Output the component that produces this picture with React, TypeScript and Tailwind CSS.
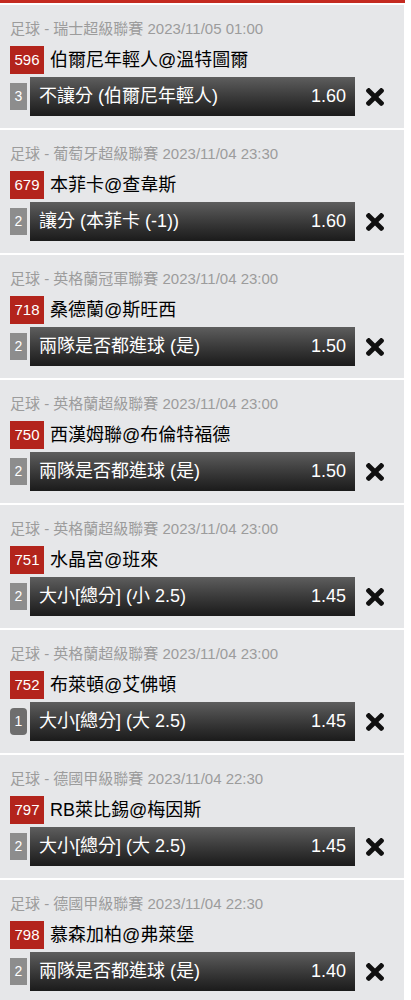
import { FC } from 'react';

interface Bet {
    league: string;
    time: string;
    code: string;
    match: string;
    leg: string;
    pick: string;
    odds: string;
    active?: boolean;
}

const bets: Bet[] = [
    { league: '瑞士超級聯賽', time: '2023/11/05 01:00', code: '596', match: '伯爾尼年輕人@溫特圖爾', leg: '3', pick: '不讓分 (伯爾尼年輕人)', odds: '1.60' },
    { league: '葡萄牙超級聯賽', time: '2023/11/04 23:30', code: '679', match: '本菲卡@查韋斯', leg: '2', pick: '讓分 (本菲卡 (-1))', odds: '1.60' },
    { league: '英格蘭冠軍聯賽', time: '2023/11/04 23:00', code: '718', match: '桑德蘭@斯旺西', leg: '2', pick: '兩隊是否都進球 (是)', odds: '1.50' },
    { league: '英格蘭超級聯賽', time: '2023/11/04 23:00', code: '750', match: '西漢姆聯@布倫特福德', leg: '2', pick: '兩隊是否都進球 (是)', odds: '1.50' },
    { league: '英格蘭超級聯賽', time: '2023/11/04 23:00', code: '751', match: '水晶宮@班來', leg: '2', pick: '大小[總分] (小 2.5)', odds: '1.45' },
    { league: '英格蘭超級聯賽', time: '2023/11/04 23:00', code: '752', match: '布萊頓@艾佛頓', leg: '1', pick: '大小[總分] (大 2.5)', odds: '1.45', active: true },
    { league: '德國甲級聯賽', time: '2023/11/04 22:30', code: '797', match: 'RB萊比錫@梅因斯', leg: '2', pick: '大小[總分] (大 2.5)', odds: '1.45' },
    { league: '德國甲級聯賽', time: '2023/11/04 22:30', code: '798', match: '慕森加柏@弗萊堡', leg: '2', pick: '兩隊是否都進球 (是)', odds: '1.40' },
];

// heavy "times" glyph
const CloseIcon: FC = () => (
    <svg width="18" height="18" viewBox="0 80 352 352" fill="#111">
        <path d="M242.72 256l100.07-100.07c12.28-12.28 12.28-32.19 0-44.48l-22.24-22.24c-12.28-12.28-32.19-12.28-44.48 0L176 189.28 75.93 89.21c-12.28-12.28-32.19-12.28-44.48 0L9.21 111.45c-12.28 12.28-12.28 32.19 0 44.48L109.28 256 9.21 356.07c-12.28 12.28-12.28 32.19 0 44.48l22.24 22.24c12.28 12.28 32.2 12.28 44.48 0L176 322.72l100.07 100.07c12.28 12.28 32.2 12.28 44.48 0l22.24-22.24c12.28-12.28 12.28-32.19 0-44.48L242.72 256z" />
    </svg>
);

const BetCard: FC<{ bet: Bet }> = ({ bet }) => (
    <div className="h-[123px] bg-[#e6e7e9] px-[10px] pt-[14px]">
        <div className="text-[15px] leading-[20px] text-[#9c9c9c] whitespace-nowrap">
            足球 - {bet.league} {bet.time}
        </div>

        <div className="mt-[7px] flex items-center h-[28px]">
            <div className="h-[28px] w-[34px] bg-[#b3241c] text-white text-[15px] flex items-center justify-center">
                {bet.code}
            </div>
            <div className="ml-[6px] text-[18px] text-black whitespace-nowrap">{bet.match}</div>
        </div>

        <div className="mt-[3px] flex items-center">
            <div className={bet.active
                ? 'h-[27px] w-[17px] rounded-[4px] bg-[#6e6e6e] text-white text-[14px] flex items-center justify-center'
                : 'h-[27px] w-[17px] bg-[#8d8d8d] text-white text-[14px] flex items-center justify-center'}>
                {bet.leg}
            </div>
            <div className="ml-[3px] h-[39px] w-[325px] bg-gradient-to-b from-[#5e5e5e] to-[#1b1b1b] text-white text-[18px] flex items-center justify-between pl-[9px] pr-[9px]">
                <span className="whitespace-nowrap">{bet.pick}</span>
                <span>{bet.odds}</span>
            </div>
            <div className="flex-1 flex justify-center">
                <CloseIcon />
            </div>
        </div>
    </div>
);

export default function App() {
    return (
        <div className="min-h-[1000px] bg-white" style={{ fontFamily: '"Liberation Sans", "Noto Sans CJK TC", sans-serif' }}>
            <div className="w-[404px]">
                <div className="h-[3px] w-[405px] bg-[#c42a20]" />
                <div className="mt-[2px] flex flex-col gap-[2px]">
                    {bets.map((bet, ix) => <BetCard bet={bet} key={`bet-${ix}`} />)}
                </div>
            </div>
        </div>
    );
}
